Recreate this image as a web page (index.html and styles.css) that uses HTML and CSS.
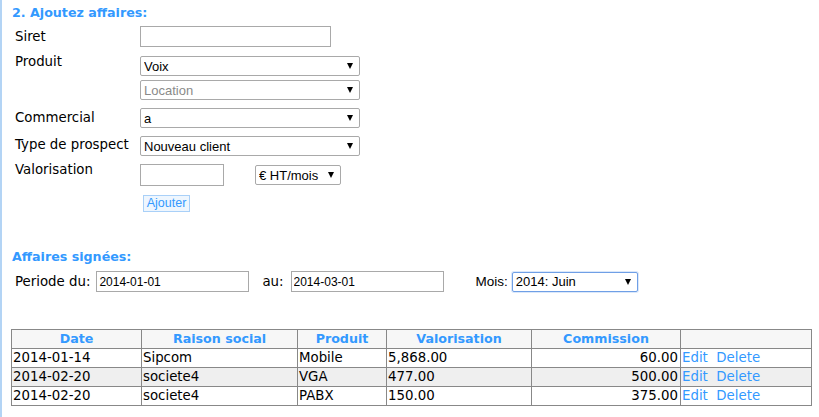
FILE: index.html
```html
<!DOCTYPE html>
<html lang="fr">
<head>
<meta charset="utf-8">
<title>Affaires</title>
<link rel="stylesheet" href="styles.css">
</head>
<body>
<div class="page">
  <h2 class="title">2. Ajoutez affaires:</h2>
  <div class="form">
    <label class="lbl lbl-siret">Siret</label>
    <div class="ctl"><input class="inp inp-siret" type="text"></div>

    <label class="lbl lbl-produit">Produit</label>
    <div class="ctl ctl-produit stack">
      <span class="sel"><select class="s-wide"><option>Voix</option></select></span>
      <span class="sel"><select class="s-wide muted"><option>Location</option></select></span>
    </div>

    <label class="lbl lbl-commercial">Commercial</label>
    <div class="ctl ctl-commercial">
      <span class="sel"><select class="s-wide"><option>a</option></select></span>
    </div>

    <label class="lbl lbl-type">Type de prospect</label>
    <div class="ctl ctl-type">
      <span class="sel"><select class="s-wide"><option>Nouveau client</option></select></span>
    </div>

    <label class="lbl lbl-valo">Valorisation</label>
    <div class="ctl ctl-valo">
      <input class="inp inp-valo" type="text">
      <span class="sel sel-unit"><select class="s-unit"><option>€ HT/mois</option></select></span>
    </div>

    <div class="empty"></div>
    <div class="ctl ctl-btn"><button class="btn" type="button">Ajouter</button></div>
  </div>

  <h2 class="title title2">Affaires signées:</h2>
  <div class="periode">
    <span class="plbl">Periode du:</span>
    <input class="inp inp-date" type="text" value="2014-01-01">
    <span class="plbl plbl-au">au:</span>
    <input class="inp inp-date" type="text" value="2014-03-01">
    <span class="plbl plbl-mois">Mois:</span>
    <span class="sel"><select class="s-mois focus"><option>2014: Juin</option></select></span>
  </div>

  <table class="grid">
    <colgroup>
      <col class="c1"><col class="c2"><col class="c3"><col class="c4"><col class="c5"><col class="c6">
    </colgroup>
    <thead>
      <tr><th>Date</th><th>Raison social</th><th>Produit</th><th>Valorisation</th><th>Commission</th><th></th></tr>
    </thead>
    <tbody>
      <tr><td>2014-01-14</td><td>Sipcom</td><td>Mobile</td><td>5,868.00</td><td class="num">60.00</td><td><a class="lnk" href="#">Edit</a>&nbsp; <a class="lnk" href="#">Delete</a></td></tr>
      <tr class="alt"><td>2014-02-20</td><td>societe4</td><td>VGA</td><td>477.00</td><td class="num">500.00</td><td><a class="lnk" href="#">Edit</a>&nbsp; <a class="lnk" href="#">Delete</a></td></tr>
      <tr><td>2014-02-20</td><td>societe4</td><td>PABX</td><td>150.00</td><td class="num">375.00</td><td><a class="lnk" href="#">Edit</a>&nbsp; <a class="lnk" href="#">Delete</a></td></tr>
    </tbody>
  </table>
</div>
</body>
</html>
```

FILE: styles.css
```css
html, body {
  margin: 0;
  padding: 0;
  background: #fff;
}
body {
  font-family: "DejaVu Sans", Verdana, sans-serif;
  font-size: 13.33px;
  color: #000;
}
.page {
  box-sizing: border-box;
  min-height: 417px;
  border-left: 2px solid #b3d4f5;
  padding: 5px 0 0 10px;
}
.title {
  margin: 0;
  font-size: 12.67px;
  line-height: 16px;
  font-weight: bold;
  color: #3399ff;
}
.form {
  display: grid;
  grid-template-columns: 128px auto;
  align-items: start;
  row-gap: 7px;
  margin-top: 5px;
}
.lbl {
  display: block;
  line-height: 16px;
  padding-left: 3px;
  white-space: nowrap;
}
.lbl-siret { margin-top: 3px; }
.lbl-produit { margin-top: 0; }
.lbl-commercial { margin-top: 3px; }
.lbl-type { margin-top: 2px; }
.lbl-valo { margin-top: -1px; }
.ctl { display: flex; align-items: flex-start; }
.stack { flex-direction: column; gap: 4px; }
.ctl-produit { margin-top: 2px; }
.ctl-commercial, .ctl-type, .ctl-valo { margin-top: 1px; }
.ctl-btn { margin-top: 2px; }

.inp {
  box-sizing: border-box;
  height: 21px;
  margin: 0;
  border: 1px solid #a9a9a9;
  padding: 0 2px;
  font: 12px "Liberation Sans", Arial, sans-serif;
  color: #000;
  background: #fff;
  outline: none;
}
.inp-siret { width: 191px; }
.inp-valo { width: 84px; height: 22px; }
.inp-date { width: 153px; }

.sel {
  position: relative;
  display: inline-block;
  line-height: 0;
}
.sel::after {
  content: "";
  position: absolute;
  right: 7px;
  top: 50%;
  margin-top: -3px;
  border-left: 3px solid transparent;
  border-right: 3px solid transparent;
  border-top: 6px solid #000;
  pointer-events: none;
}
.sel select {
  -webkit-appearance: none;
  appearance: none;
  box-sizing: border-box;
  height: 20px;
  margin: 0;
  border: 1px solid #a9a9a9;
  border-radius: 2px;
  padding: 0 16px 0 3px;
  font: 13px "Liberation Sans", Arial, sans-serif;
  color: #000;
  background: #fff;
  outline: none;
}
.s-wide { width: 220px; }
.muted { color: #8a8a8a !important; }
.sel-unit { margin-left: 31px; margin-top: 1px; }
.s-unit { width: 86px; }
.s-mois { width: 126px; }
.focus {
  border-color: #6f9fe6 !important;
  box-shadow: 0 0 0 1px #dbe8fa;
}

.btn {
  box-sizing: border-box;
  width: 47px;
  height: 17px;
  margin: 0 0 0 3px;
  padding: 0;
  border: 1px solid #a9d0f8;
  background: #eef6fe;
  color: #3399ff;
  font: 12.5px "Liberation Sans", Arial, sans-serif;
  line-height: 15px;
}

.title2 { margin-top: 37px; }
.periode {
  display: flex;
  align-items: center;
  margin-top: 6px;
  padding-left: 3px;
}
.plbl { line-height: 16px; margin-right: 6px; white-space: nowrap; }
.plbl-au { margin-left: 13px; margin-right: 7px; }
.plbl-mois {
  margin-left: 32px;
  margin-right: 4px;
  font-family: "Liberation Sans", Arial, sans-serif;
  font-size: 13.5px;
}

.grid {
  margin: 37px 0 0 -1px;
  border-collapse: collapse;
  table-layout: fixed;
  width: 800px;
}
.c1 { width: 130px; }
.c2 { width: 156px; }
.c3 { width: 89px; }
.c4 { width: 145px; }
.c5 { width: 149px; }
.c6 { width: 131px; }
.grid th, .grid td {
  border: 1px solid #888;
  padding: 0 1px;
  height: 18px;
  line-height: 18px;
  white-space: nowrap;
  overflow: hidden;
  text-align: left;
}
.grid th {
  background: #f7f7f7;
  color: #3399ff;
  font-size: 12.67px;
  font-weight: bold;
  text-align: center;
}
.grid .alt td { background: #efefef; }
.grid td.num { text-align: right; padding-right: 2px; }
.lnk { color: #3399ff; text-decoration: none; }
```
